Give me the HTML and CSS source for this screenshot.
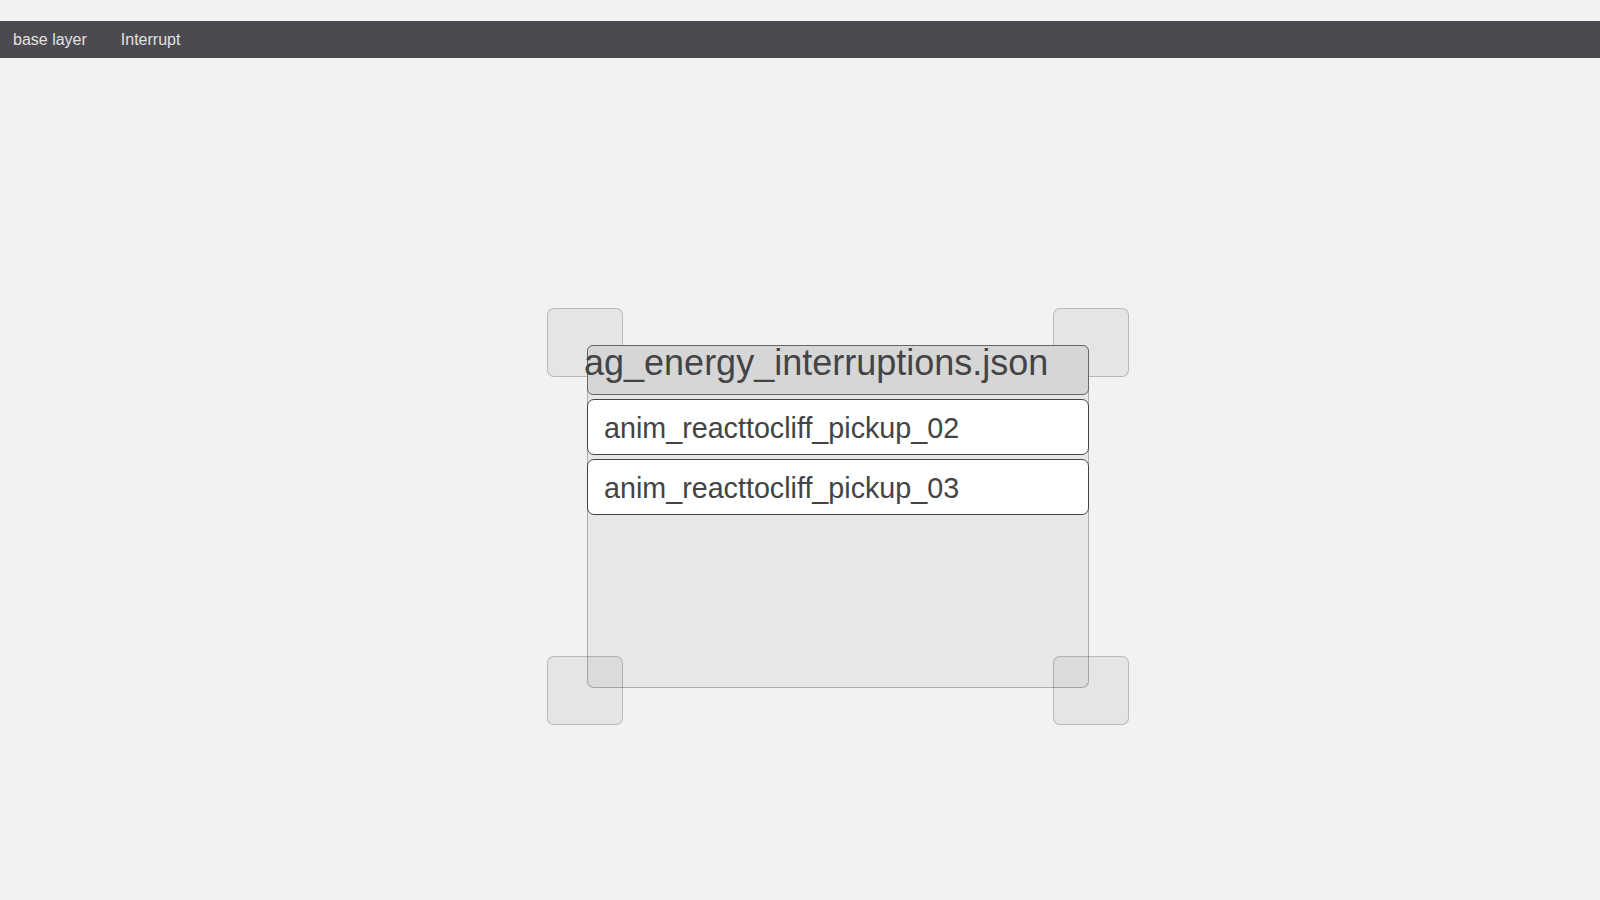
FILE: index.html
```html
<!DOCTYPE html>
<html>
<head>
<meta charset="utf-8">
<link rel="stylesheet" href="styles.css">
</head>
<body>
<div class="top-gap"></div>
<nav class="bar">
  <span class="bar-item">base layer</span>
  <span class="bar-item">Interrupt</span>
</nav>
<main class="canvas">
  <div class="node">
    <div class="handle handle-tl"></div>
    <div class="handle handle-tr"></div>
    <div class="handle handle-bl"></div>
    <div class="handle handle-br"></div>
    <div class="node-body">
      <div class="node-title">ag_energy_interruptions.json</div>
      <div class="node-row">anim_reacttocliff_pickup_02</div>
      <div class="node-row">anim_reacttocliff_pickup_03</div>
    </div>
  </div>
</main>
</body>
</html>
```
FILE: styles.css
```css
html, body {
  margin: 0;
  padding: 0;
}
body {
  background: #f2f2f2;
  font-family: "Liberation Sans", Arial, sans-serif;
  width: 1600px;
  height: 900px;
  overflow: hidden;
}
.top-gap {
  height: 21px;
}
.bar {
  height: 37px;
  background: #4b4a51;
  display: flex;
  align-items: center;
  gap: 34px;
  padding-left: 13px;
}
.bar-item {
  color: #e2e2e2;
  font-size: 16px;
}
.canvas {
  position: relative;
  height: 842px;
}
.node {
  position: absolute;
  left: 587px;
  top: 287px;
  width: 502px;
  height: 343px;
}
.handle {
  position: absolute;
  width: 76px;
  height: 69px;
  box-sizing: border-box;
  background: rgba(0, 0, 0, 0.05);
  border: 1px solid rgba(0, 0, 0, 0.2);
  border-radius: 7px;
}
.handle-tl { left: -40px; top: -37px; }
.handle-tr { left: 466px; top: -37px; }
.handle-bl { left: -40px; top: 311px; }
.handle-br { left: 466px; top: 311px; }
.node-body {
  position: relative;
  box-sizing: border-box;
  width: 100%;
  height: 100%;
  background: rgba(0, 0, 0, 0.045);
  border: 1px solid rgba(0, 0, 0, 0.25);
  border-radius: 7px;
  display: flex;
  flex-direction: column;
  gap: 4px;
}
.node-title {
  margin: -1px -1px 0;
  height: 50px;
  box-sizing: border-box;
  background: #d6d6d6;
  border: 1px solid #666;
  border-radius: 6px;
  color: #444;
  font-size: 36px;
  line-height: 34px;
  white-space: nowrap;
  text-indent: -4px;
  padding-top: 0;
}
.node-row {
  margin: 0 -1px;
  height: 56px;
  box-sizing: border-box;
  background: #fff;
  border: 1.5px solid #444;
  border-radius: 7px;
  color: #444;
  font-size: 28.7px;
  padding-left: 16px;
  padding-top: 2px;
  display: flex;
  align-items: center;
  white-space: nowrap;
}
```
